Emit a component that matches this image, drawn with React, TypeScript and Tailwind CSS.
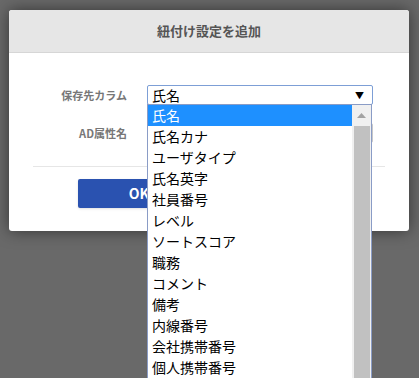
import React from 'react';

const options = [
    '氏名',
    '氏名カナ',
    'ユーザタイプ',
    '氏名英字',
    '社員番号',
    'レベル',
    'ソートスコア',
    '職務',
    'コメント',
    '備考',
    '内線番号',
    '会社携帯番号',
    '個人携帯番号',
];

export default function App() {
    return (
        <div className="w-[419px] h-[378px] overflow-hidden bg-[#696969] font-['Noto_Sans_CJK_JP',sans-serif] pt-[10px] pl-[9px]">
            <div className="w-[400px] bg-white rounded-[3px] shadow-[0_0_16px_rgba(0,0,0,0.5)]">
                {/* header */}
                <div className="h-[43px] bg-[#e6e6e6] border-b border-[#d6d6d6] rounded-t-[3px] flex items-center justify-center text-[13px] font-bold text-[#555]">
                    紐付け設定を追加
                </div>

                <div className="pt-[32px]">
                    <div className="flex items-center h-[20px]">
                        <label className="w-[118px] text-right text-[11px] font-bold text-[#777]">保存先カラム</label>
                        <div className="relative ml-[20px] w-[226px]">
                            <div className="h-[20px] border border-[#7d9fd6] rounded-[2px] flex items-center justify-between pl-[4px] pr-[8px] text-[14px] text-black leading-none">
                                <span>氏名</span>
                                <span className="text-[9px]">▼</span>
                            </div>

                            {/* dropdown list */}
                            <div className="absolute left-0 top-[19px] w-[225px] bg-white border border-[#8a9cc6] z-10 flex">
                                <div className="flex-1">
                                    {options.map((o, i) => (
                                        <div
                                            key={o}
                                            className={
                                                i === 0
                                                    ? 'h-[21px] pl-[4px] flex items-center text-[14px] bg-[#1e90ff] text-white'
                                                    : 'h-[21px] pl-[4px] flex items-center text-[14px] text-black'
                                            }
                                        >
                                            {o}
                                        </div>
                                    ))}
                                </div>
                                <div className="w-[19px] bg-[#f0f0f0] flex flex-col items-center">
                                    <div className="h-[21px] flex items-center justify-center">
                                        <svg width="9" height="5" viewBox="0 0 9 5">
                                            <path d="M4.5 0 L9 5 L0 5 Z" fill="#a3a3a3" />
                                        </svg>
                                    </div>
                                    <div className="w-[16px] flex-1 bg-[#c1c1c1]" />
                                </div>
                            </div>
                        </div>
                    </div>

                    <div className="flex items-center h-[20px] mt-[18px]">
                        <label className="w-[118px] text-right text-[11px] font-bold text-[#777]">AD属性名</label>
                        <div className="ml-[20px] w-[226px] h-[20px] border border-[#c8c8c8] rounded-[2px]" />
                    </div>
                </div>

                <div className="mx-[24px] mt-[23px] border-t border-[#e6e6e6]" />

                <div className="flex gap-[18px] pl-[69px] pt-[12px] pb-[23px]">
                    <button className="w-[122px] h-[29px] bg-[#2a52b0] rounded-[2px] text-white text-[14px] font-bold shadow-sm">
                        OK
                    </button>
                    <button className="w-[122px] h-[29px] bg-[#e6e6e6] rounded-[2px] text-[#555] text-[14px] font-bold">
                        キャンセル
                    </button>
                </div>
            </div>
        </div>
    );
}
